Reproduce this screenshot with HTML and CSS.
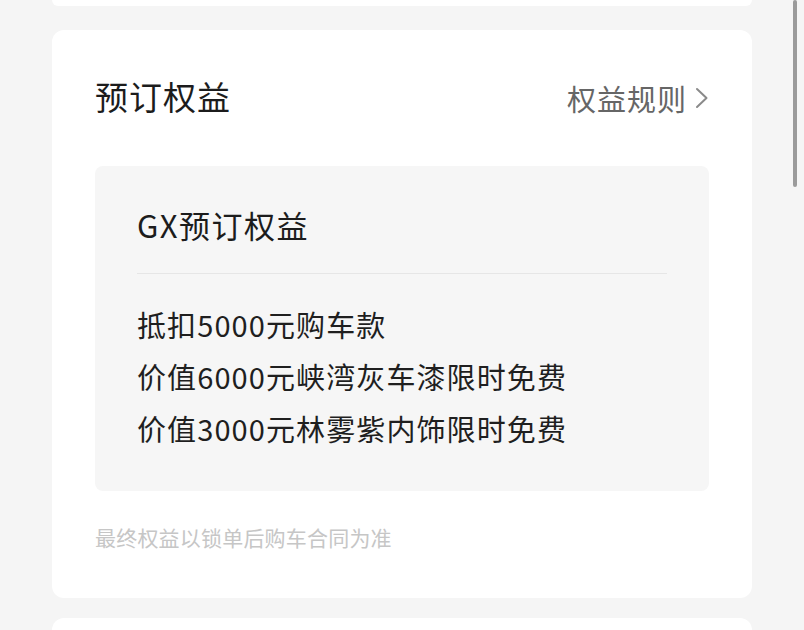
FILE: index.html
```html
<!DOCTYPE html>
<html lang="zh-CN">

<head>
    <meta charset="UTF-8">
    <meta name="viewport" content="width=device-width, initial-scale=1.0">
    <title>预订权益</title>
    <link rel="stylesheet" href="styles.css">
</head>

<body>
    <div class="card card-prev"></div>

    <div class="card">
        <div class="card-header">
            <h2 class="card-title">预订权益</h2>
            <a class="rules-link" href="#">
                权益规则
                <svg class="chevron" width="14" height="22" viewBox="0 0 14 22">
                    <path d="M2 2 L11.5 11 L2 20" fill="none" stroke="#8a8a8a" stroke-width="2" stroke-linecap="round" stroke-linejoin="round"/>
                </svg>
            </a>
        </div>

        <div class="benefit-box">
            <h3 class="benefit-title">GX预订权益</h3>
            <ul class="benefit-list">
                <li>抵扣5000元购车款</li>
                <li>价值6000元峡湾灰车漆限时免费</li>
                <li>价值3000元林雾紫内饰限时免费</li>
            </ul>
        </div>

        <p class="footnote">最终权益以锁单后购车合同为准</p>
    </div>

    <div class="card card-next"></div>

    <div class="scrollbar"></div>
</body>

</html>
```

FILE: styles.css
```css
body {
    margin: 0;
    background: #f5f5f5;
    font-family: "Noto Sans CJK SC", "Noto Sans", sans-serif;
    color: #1f1f1f;
    overflow: hidden;
}

.card {
    background: #fff;
    margin: 0 52px;
    border-radius: 12px;
    padding: 0 43px 46px;
}

.card-prev {
    height: 6px;
    padding: 0;
    border-radius: 0 0 12px 12px;
    margin-bottom: 24px;
}

.card-next {
    margin-top: 20px;
    height: 40px;
    padding: 0;
}

.card-header {
    height: 136px;
    display: flex;
    align-items: center;
    justify-content: space-between;
}

.card-title {
    margin: 0;
    font-size: 33px;
    font-weight: 400;
    line-height: 40px;
    letter-spacing: 1px;
    color: #1c1c1c;
    position: relative;
    top: -2px;
}

.rules-link {
    display: flex;
    align-items: center;
    gap: 8px;
    font-size: 29px;
    line-height: 40px;
    letter-spacing: 1px;
    color: #666;
    text-decoration: none;
}

.chevron {
    display: block;
}

.benefit-box {
    background: #f6f6f6;
    border-radius: 8px;
    padding: 40px 42px 37px;
}

.benefit-title {
    margin: 0;
    font-size: 31px;
    font-weight: 400;
    line-height: 38px;
    letter-spacing: 1.5px;
    padding-bottom: 29px;
    border-bottom: 1px solid #e6e6e6;
    color: #1c1c1c;
}

.benefit-list {
    list-style: none;
    margin: 0;
    padding: 24px 0 0;
}

.benefit-list li {
    font-size: 29px;
    line-height: 52px;
    letter-spacing: 1.1px;
    color: #1f1f1f;
}

.footnote {
    margin: 31px 0 0;
    font-size: 21px;
    line-height: 30px;
    letter-spacing: 0.2px;
    color: #c6c6c6;
}

.scrollbar {
    position: fixed;
    top: 0;
    right: 7px;
    width: 4px;
    height: 187px;
    border-radius: 2px;
    background: #9b9b9b;
}
```
